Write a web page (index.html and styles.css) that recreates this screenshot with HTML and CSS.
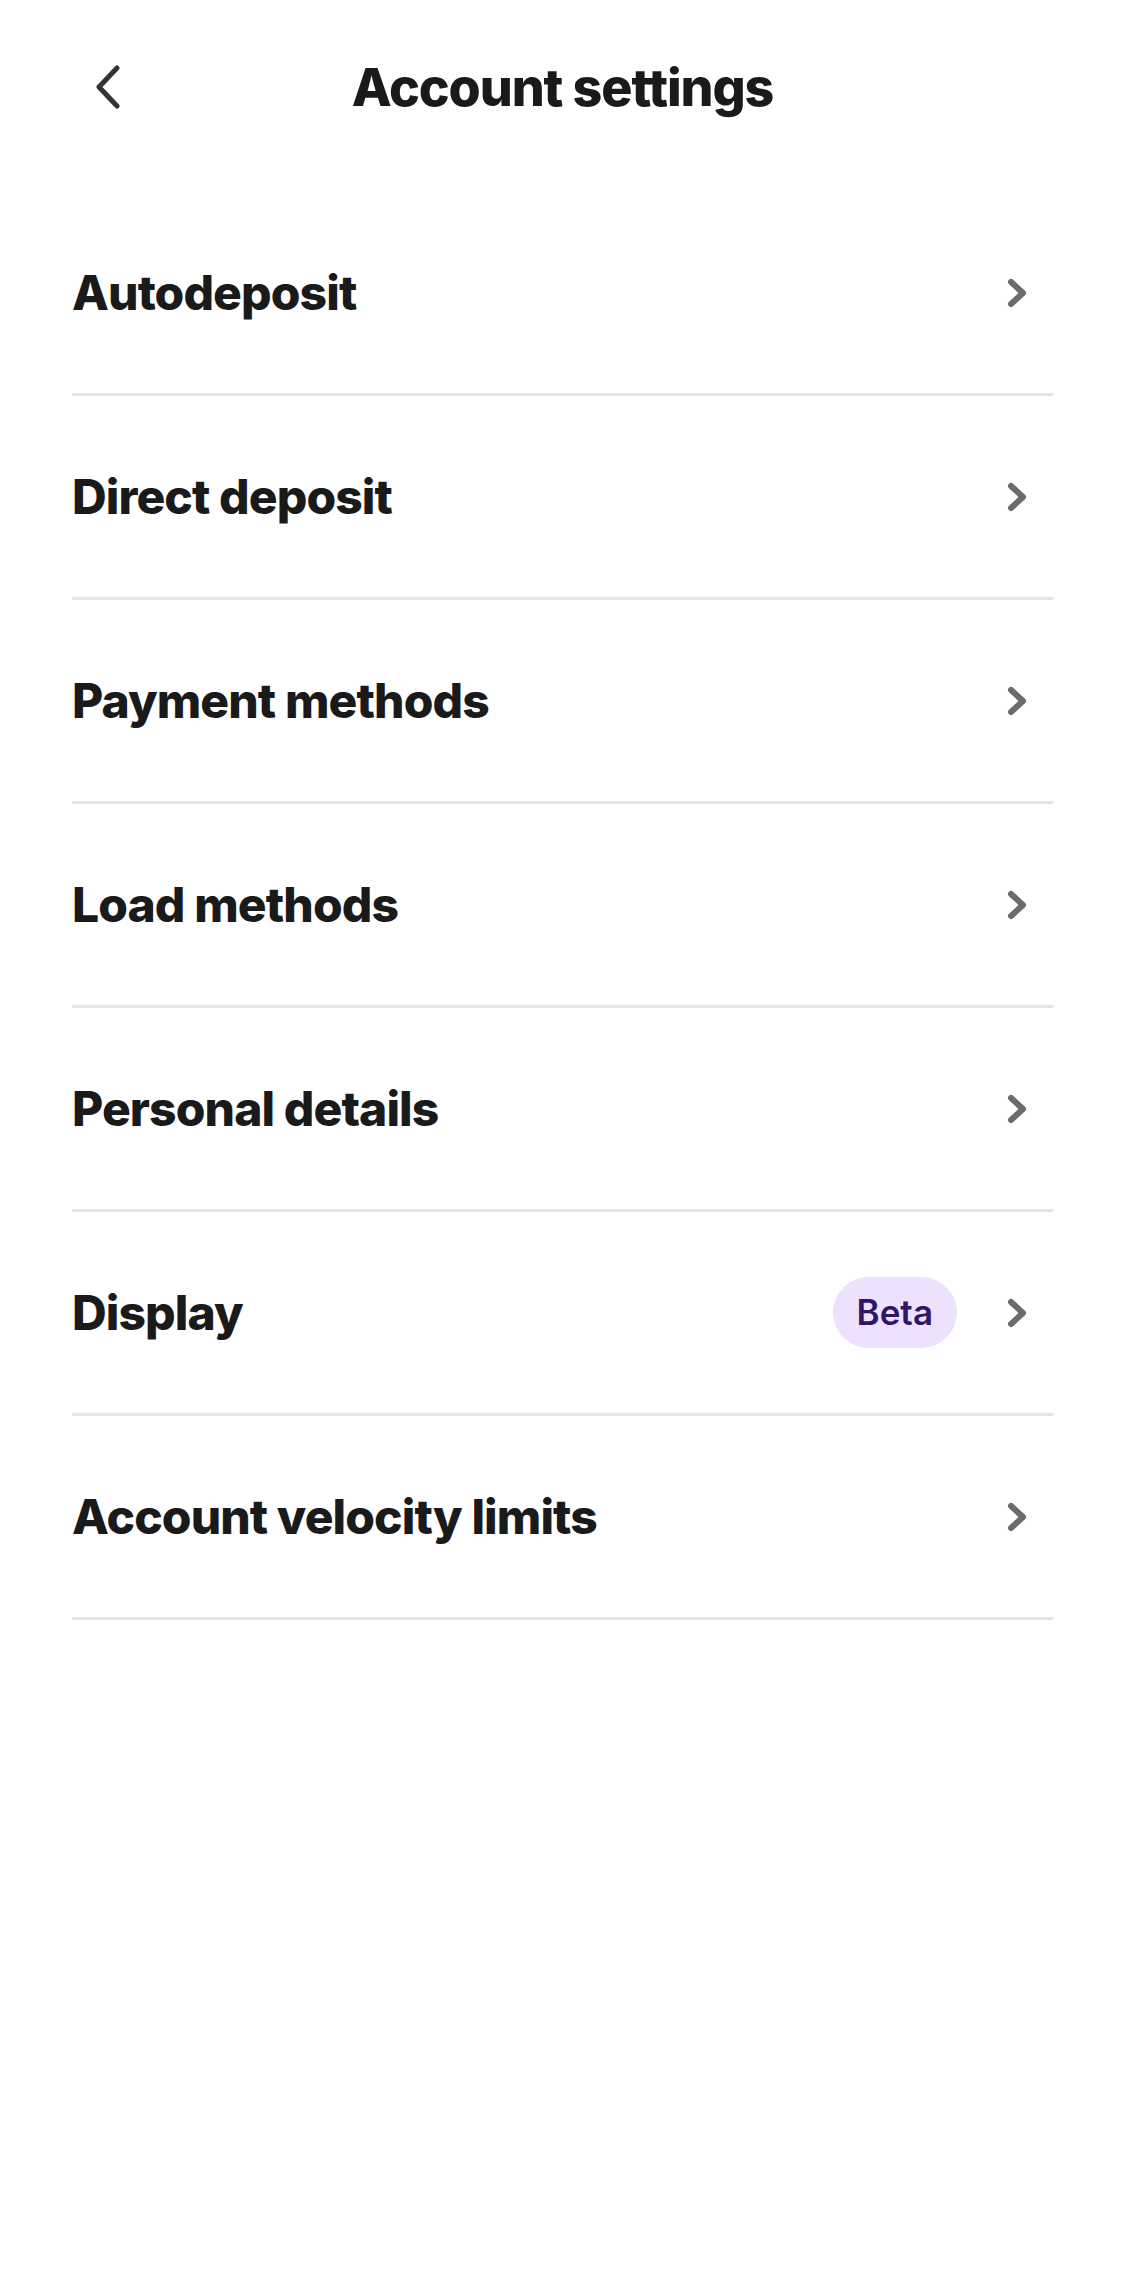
FILE: index.html
```html
<!DOCTYPE html>
<html lang="en">
<head>
    <meta charset="UTF-8">
    <meta name="viewport" content="width=device-width, initial-scale=1.0">
    <title>Account settings</title>
    <link rel="stylesheet" href="styles.css">
</head>
<body>
    <div class="screen">
        <header class="top-bar">
            <button class="back-button" aria-label="Back">
                <svg width="28" height="50" viewBox="0 0 28 50" fill="none">
                    <path d="M21 5 L3 24 L21 43" stroke="#333333" stroke-width="5" stroke-linecap="round" stroke-linejoin="round"/>
                </svg>
            </button>
            <h1>Account settings</h1>
        </header>

        <ul class="settings-list">
            <li class="settings-row">
                <span class="row-label">Autodeposit</span>
                <svg class="chevron" width="20" height="32" viewBox="0 0 20 32" fill="none"><path d="M4 5 L16 16 L4 27" stroke="#6b6b6b" stroke-width="6" stroke-linecap="round" stroke-linejoin="round"/></svg>
            </li>
            <li class="settings-row">
                <span class="row-label">Direct deposit</span>
                <svg class="chevron" width="20" height="32" viewBox="0 0 20 32" fill="none"><path d="M4 5 L16 16 L4 27" stroke="#6b6b6b" stroke-width="6" stroke-linecap="round" stroke-linejoin="round"/></svg>
            </li>
            <li class="settings-row">
                <span class="row-label">Payment methods</span>
                <svg class="chevron" width="20" height="32" viewBox="0 0 20 32" fill="none"><path d="M4 5 L16 16 L4 27" stroke="#6b6b6b" stroke-width="6" stroke-linecap="round" stroke-linejoin="round"/></svg>
            </li>
            <li class="settings-row">
                <span class="row-label">Load methods</span>
                <svg class="chevron" width="20" height="32" viewBox="0 0 20 32" fill="none"><path d="M4 5 L16 16 L4 27" stroke="#6b6b6b" stroke-width="6" stroke-linecap="round" stroke-linejoin="round"/></svg>
            </li>
            <li class="settings-row">
                <span class="row-label">Personal details</span>
                <svg class="chevron" width="20" height="32" viewBox="0 0 20 32" fill="none"><path d="M4 5 L16 16 L4 27" stroke="#6b6b6b" stroke-width="6" stroke-linecap="round" stroke-linejoin="round"/></svg>
            </li>
            <li class="settings-row">
                <span class="row-label">Display</span>
                <span class="badge">Beta</span>
                <svg class="chevron" width="20" height="32" viewBox="0 0 20 32" fill="none"><path d="M4 5 L16 16 L4 27" stroke="#6b6b6b" stroke-width="6" stroke-linecap="round" stroke-linejoin="round"/></svg>
            </li>
            <li class="settings-row">
                <span class="row-label">Account velocity limits</span>
                <svg class="chevron" width="20" height="32" viewBox="0 0 20 32" fill="none"><path d="M4 5 L16 16 L4 27" stroke="#6b6b6b" stroke-width="6" stroke-linecap="round" stroke-linejoin="round"/></svg>
            </li>
        </ul>
    </div>
</body>
</html>
```

FILE: styles.css
```css
body {
    margin: 0;
    background-color: #ffffff;
    font-family: Inter, "Liberation Sans", Arial, sans-serif;
    color: #1a1a1a;
}
.screen {
    padding: 0 72px;
}
.top-bar {
    display: flex;
    align-items: center;
    justify-content: center;
    position: relative;
    height: 174px;
}
.back-button {
    position: absolute;
    left: 24px;
    top: 63px;
    background: none;
    border: none;
    padding: 0;
    cursor: pointer;
}
.top-bar h1 {
    margin: 0;
    font-size: 52px;
    font-weight: 800;
    letter-spacing: -1.1px;
}
.settings-list {
    list-style: none;
    margin: 18px 0 0;
    padding: 0;
}
.settings-row {
    display: flex;
    align-items: center;
    height: 201px;
    border-bottom: 3px solid #e5e5e5;
}
.row-label {
    flex: 1;
    font-size: 48px;
    font-weight: 800;
    letter-spacing: -0.9px;
}
.badge {
    background-color: #ede1fd;
    color: #2e1668;
    font-size: 35px;
    font-weight: 600;
    border-radius: 36px;
    padding: 0 24px;
    height: 71px;
    line-height: 71px;
    margin-right: 50px;
}
.chevron {
    margin-right: 26px;
}
```
